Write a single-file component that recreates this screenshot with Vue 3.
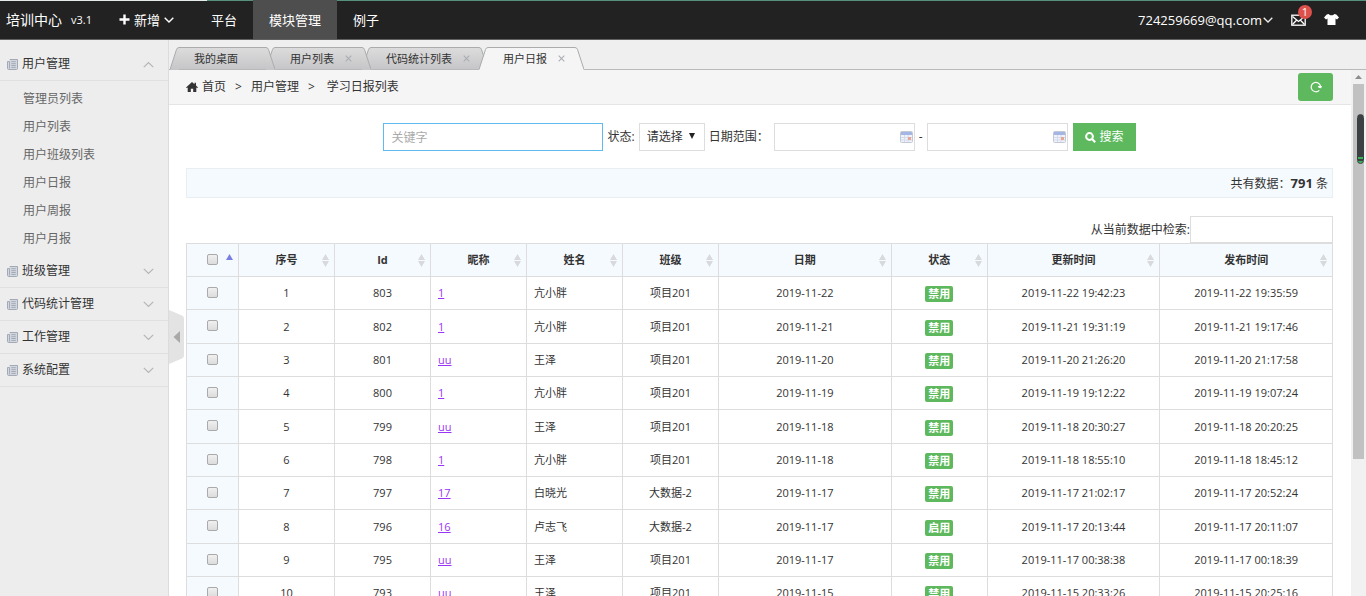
<script setup>
import { ref } from 'vue'

const navItems = [
  { label: '平台' },
  { label: '模块管理', active: true },
  { label: '例子' },
]

const menus = [
  {
    title: '用户管理',
    open: true,
    children: ['管理员列表', '用户列表', '用户班级列表', '用户日报', '用户周报', '用户月报'],
  },
  { title: '班级管理' },
  { title: '代码统计管理' },
  { title: '工作管理' },
  { title: '系统配置' },
]

const tabs = [
  { label: '我的桌面' },
  { label: '用户列表', closable: true },
  { label: '代码统计列表', closable: true },
  { label: '用户日报', closable: true, active: true },
]

const columns = ['序号', 'Id', '昵称', '姓名', '班级', '日期', '状态', '更新时间', '发布时间']

const rows = [
  [1, 803, '1', '亢小胖', '项目201', '2019-11-22', '禁用', '2019-11-22 19:42:23', '2019-11-22 19:35:59'],
  [2, 802, '1', '亢小胖', '项目201', '2019-11-21', '禁用', '2019-11-21 19:31:19', '2019-11-21 19:17:46'],
  [3, 801, 'uu', '王泽', '项目201', '2019-11-20', '禁用', '2019-11-20 21:26:20', '2019-11-20 21:17:58'],
  [4, 800, '1', '亢小胖', '项目201', '2019-11-19', '禁用', '2019-11-19 19:12:22', '2019-11-19 19:07:24'],
  [5, 799, 'uu', '王泽', '项目201', '2019-11-18', '禁用', '2019-11-18 20:30:27', '2019-11-18 20:20:25'],
  [6, 798, '1', '亢小胖', '项目201', '2019-11-18', '禁用', '2019-11-18 18:55:10', '2019-11-18 18:45:12'],
  [7, 797, '17', '白晓光', '大数据-2', '2019-11-17', '禁用', '2019-11-17 21:02:17', '2019-11-17 20:52:24'],
  [8, 796, '16', '卢志飞', '大数据-2', '2019-11-17', '启用', '2019-11-17 20:13:44', '2019-11-17 20:11:07'],
  [9, 795, 'uu', '王泽', '项目201', '2019-11-17', '禁用', '2019-11-17 00:38:38', '2019-11-17 00:18:39'],
  [10, 793, 'uu', '王泽', '项目201', '2019-11-15', '禁用', '2019-11-15 20:33:26', '2019-11-15 20:25:16'],
]

const keyword = ref('')
const dateFrom = ref('')
const dateTo = ref('')
const filterText = ref('')
</script>

<template>
  <div class="page">
    <header class="topbar">
      <a class="logo" href="#">培训中心</a>
      <span class="version">v3.1</span>
      <button class="add" type="button">
        <svg width="11" height="11" viewBox="0 0 11 11"><path d="M5.500 0.500V10.500M0.500 5.500H10.500" stroke="#fff" stroke-width="2.400" /></svg>
        <span>新增</span>
        <svg width="10" height="6" viewBox="0 0 10 6"><path d="M0.700 0.700L5 5L9.300 0.700" fill="none" stroke="#fff" stroke-width="1.400" /></svg>
      </button>
      <nav class="nav">
        <a v-for="n in navItems" :key="n.label" href="#" :class="{ active: n.active }">{{ n.label }}</a>
      </nav>
      <div class="user">
        <a class="account" href="#">
          724259669@qq.com
          <svg width="10" height="6" viewBox="0 0 10 6"><path d="M0.700 0.700L5 5L9.300 0.700" fill="none" stroke="#eee" stroke-width="1.300" /></svg>
        </a>
        <a class="mail" href="#" aria-label="消息">
          <svg width="15" height="12" viewBox="0 0 15 12" fill="none" stroke="#fff" stroke-width="1.300">
            <rect x="0.800" y="1.200" width="13.400" height="10" />
            <path d="M1.500 2.500L7.500 7.500L13.500 2.500M1.500 10.500L5.500 6.200M13.500 10.500L9.500 6.200" />
          </svg>
          <span class="badge">1</span>
        </a>
        <a class="skin" href="#" aria-label="换肤">
          <svg width="15" height="11" viewBox="0 0 15 11"><path d="M4.700 0C5.500 1.800 9.500 1.800 10.300 0L12.300 0.500L15 3.400L13 5.400L11.500 4.500V11H3.500V4.500L2 5.400L0 3.400L2.700 0.500Z" fill="#fff" /></svg>
        </a>
      </div>
    </header>

    <div class="body">
      <aside class="sidebar">
        <section v-for="m in menus" :key="m.title">
          <button class="menu-title" type="button">
            <svg width="11" height="11" viewBox="0 0 11 11" fill="none" stroke="#a3a9b5">
              <path d="M2.700 0.500H10.500V9.500Q10.500 10.500 9.500 10.500H1.700Q0.500 10.500 0.500 9.300V2.500H2.500V9.500" fill="#d3d8e0" />
              <path d="M4.300 2.700H8.800M4.300 4.700H8.800M4.300 6.500H8.800M4.300 8.400H8.800" />
            </svg>
            <span>{{ m.title }}</span>
            <svg class="chevron" :class="{ up: m.open }" width="11" height="7" viewBox="0 0 11 7"><path d="M0.800 0.800L5.500 5.500L10.200 0.800" fill="none" stroke="#b5b5b5" stroke-width="1.200" /></svg>
          </button>
          <ul v-if="m.open" class="submenu">
            <li v-for="c in m.children" :key="c"><a href="#">{{ c }}</a></li>
          </ul>
        </section>
      </aside>

      <main class="main">
        <button class="collapse" type="button" aria-label="收起菜单">
          <svg width="15" height="54" viewBox="0 0 15 54"><path d="M0 0L13 5.500Q15 6.500 15 8.500V45.500Q15 47.500 13 48.500L0 54Z" fill="#e3e3e3" /><path d="M11 21V33L4.500 27Z" fill="#a9a9a9" /></svg>
        </button>

        <svg class="defs" width="0" height="0" aria-hidden="true">
          <defs>
            <linearGradient id="tab-fill" x1="0" y1="0" x2="0" y2="1">
              <stop offset="0" stop-color="#dcdcdd" />
              <stop offset="1" stop-color="#c6c6c8" />
            </linearGradient>
          </defs>
        </svg>
        <div class="tabs">
          <div v-for="t in tabs" :key="t.label" class="tab" :class="{ active: t.active }">
            <svg class="edge" width="9" height="23" viewBox="0 0 9 23">
              <path class="fill" d="M0 23L6.500 2.500Q7.200 0.500 9 0.500V23Z" />
              <path class="line" d="M0 22.500L6.500 2.500Q7.200 0.500 9 0.500" />
            </svg>
            <div class="tab-body">
              <a href="#">{{ t.label }}</a>
              <button v-if="t.closable" type="button" aria-label="关闭">
                <svg width="7" height="7" viewBox="0 0 7 7"><path d="M0.700 0.700L6.300 6.300M6.300 0.700L0.700 6.300" stroke="currentColor" stroke-width="1.100" /></svg>
              </button>
            </div>
            <svg class="edge" width="9" height="23" viewBox="0 0 9 23">
              <path class="fill" d="M9 23L2.500 2.500Q1.800 0.500 0 0.500V23Z" />
              <path class="line" d="M9 22.500L2.500 2.500Q1.800 0.500 0 0.500" />
            </svg>
          </div>
        </div>

        <div class="frame">
          <div class="content">
            <div class="crumbs">
              <svg width="12" height="10" viewBox="0 0 12 10"><path d="M6 0L8.500 2.200V0.800H10V3.500L12 5.400L11.200 6.100L10.300 5.400V10H7.200V6.800H4.800V10H1.700V5.400L0.800 6.100L0 5.400Z" fill="#333" /></svg>
              <a href="#">首页</a>
              <span class="sep">&gt;</span>
              <a href="#">用户管理</a>
              <span class="sep">&gt;</span>
              <span class="current">学习日报列表</span>
              <button class="refresh" type="button" aria-label="刷新">
                <svg width="12" height="12" viewBox="0 0 12 12"><path d="M9.300 9.300A4.700 4.700 0 1 1 10.500 5.200" fill="none" stroke="#fff" stroke-width="1.200" /><path d="M7.600 5H12L11.200 7.300L8.900 7Z" fill="#fff" /></svg>
              </button>
            </div>

            <div class="inner">
              <form class="search" @submit.prevent>
                <input v-model="keyword" class="keyword" type="text" placeholder="关键字" aria-label="关键字">
                <label class="lbl-status" for="status">状态:</label>
                <span class="select-wrap">
                  <select id="status"><option>请选择</option></select>
                  <svg width="6" height="6" viewBox="0 0 6 6"><path d="M0 0H6L3 6Z" fill="#222" /></svg>
                </span>
                <label class="lbl-date" for="from">日期范围：</label>
                <span class="date">
                  <input id="from" v-model="dateFrom" type="text">
                  <svg width="13" height="12" viewBox="0 0 13 12"><rect x="0.500" y="0.500" width="12" height="11" rx="1" fill="#f0f3fa" stroke="#c3c8d4" /><rect x="1" y="1" width="11" height="3" fill="#a3b6e4" /><path d="M1 6.500H12M1 9H12M4.500 4V11M8 4V11" stroke="#d3dbec" /><rect x="8" y="6" width="3" height="3" fill="#e8a593" /></svg>
                </span>
                <span class="dash">-</span>
                <span class="date">
                  <input v-model="dateTo" type="text" aria-label="结束日期">
                  <svg width="13" height="12" viewBox="0 0 13 12"><rect x="0.500" y="0.500" width="12" height="11" rx="1" fill="#f0f3fa" stroke="#c3c8d4" /><rect x="1" y="1" width="11" height="3" fill="#a3b6e4" /><path d="M1 6.500H12M1 9H12M4.500 4V11M8 4V11" stroke="#d3dbec" /><rect x="8" y="6" width="3" height="3" fill="#e8a593" /></svg>
                </span>
                <button class="submit" type="submit">
                  <svg width="11" height="11" viewBox="0 0 11 11" fill="none" stroke="#fff"><circle cx="4.500" cy="4.500" r="3.400" stroke-width="2" /><path d="M7 7L10.200 10.200" stroke-width="2.200" /></svg>
                  搜索
                </button>
              </form>

              <div class="summary">共有数据：<strong>791</strong> 条</div>

              <div class="filter">
                <label for="filter">从当前数据中检索:</label>
                <input id="filter" v-model="filterText" type="text">
              </div>

              <table>
                <colgroup>
                  <col class="c-check"><col class="c-s"><col class="c-s"><col class="c-s"><col class="c-s"><col class="c-s"><col><col class="c-s"><col><col>
                </colgroup>
                <thead>
                  <tr>
                    <th>
                      <input type="checkbox" aria-label="全选">
                      <svg class="asc" width="7" height="6" viewBox="0 0 7 6"><path d="M3.500 0L7 6H0Z" fill="#7b80e0" /></svg>
                    </th>
                    <th v-for="c in columns" :key="c">
                      {{ c }}
                      <svg class="sort" width="7" height="13" viewBox="0 0 7 13"><path d="M3.500 0L7 6H0ZM0 7H7L3.500 13Z" fill="#d7d9dc" /></svg>
                    </th>
                  </tr>
                </thead>
                <tbody>
                  <tr v-for="r in rows" :key="r[0]">
                    <td class="check"><input type="checkbox" :aria-label="'选择 ' + r[1]"></td>
                    <td>{{ r[0] }}</td>
                    <td>{{ r[1] }}</td>
                    <td class="left"><a href="#">{{ r[2] }}</a></td>
                    <td class="left">{{ r[3] }}</td>
                    <td>{{ r[4] }}</td>
                    <td>{{ r[5] }}</td>
                    <td><span class="status">{{ r[6] }}</span></td>
                    <td>{{ r[7] }}</td>
                    <td>{{ r[8] }}</td>
                  </tr>
                </tbody>
              </table>
            </div>
          </div>

          <div class="scrollbar">
            <svg width="7" height="4" viewBox="0 0 7 4"><path d="M3.500 0L7 4H0Z" fill="#8d8d8d" /></svg>
            <div class="thumb"></div>
            <div class="meter"></div>
          </div>
        </div>
      </main>
    </div>
  </div>
</template>

<style>
body {
  overflow: hidden;
}
</style>

<style scoped>
.page {
  display: flex;
  flex-direction: column;
  height: 100vh;
  overflow: hidden;
  font-family: "Open Sans", "Noto Sans CJK SC", sans-serif;
  font-size: 12px;
  line-height: 18px;
  color: #333;
  background: #fff;
}
.page * {
  box-sizing: border-box;
}
a {
  color: inherit;
  text-decoration: none;
}
button,
input,
select {
  font: inherit;
  color: inherit;
  margin: 0;
}
button {
  border: 0;
  padding: 0;
  background: none;
}
svg {
  display: block;
  flex: none;
}
.defs {
  position: absolute;
}

/* top bar */
.topbar {
  flex: none;
  display: flex;
  align-items: center;
  height: 40px;
  padding-left: 6px;
  background: linear-gradient(90deg, #e4ebe8 207px, #56917f 207px) top / 100% 1px no-repeat, #222;
  border-bottom: 1px solid #606060;
  color: #fff;
  font-size: 13px;
}
.logo {
  font-size: 14px;
}
.version {
  margin-left: 9px;
  font-size: 11px;
}
.add {
  display: flex;
  align-items: center;
  gap: 4px;
  margin-left: 27px;
}
.nav {
  display: flex;
  align-self: stretch;
  margin-left: 21px;
}
.nav a {
  display: flex;
  align-items: center;
  padding: 0 16px;
}
.nav .active {
  background: #4e4e4e;
}
.user {
  display: flex;
  align-items: center;
  margin-left: auto;
  padding-right: 27px;
}
.account {
  display: flex;
  align-items: center;
  gap: 1px;
}
.mail {
  position: relative;
  margin: 0 18px;
}
.badge {
  position: absolute;
  left: 7px;
  top: -9px;
  width: 14px;
  height: 14px;
  border-radius: 7px;
  background: #dd514c;
  font-size: 11px;
  line-height: 14px;
  text-align: center;
}

/* sidebar */
.body {
  flex: 1;
  display: flex;
  min-height: 0;
}
.sidebar {
  flex: none;
  width: 169px;
  padding-top: 8px;
  background: #ededed;
  border-right: 1px solid #dcdcdc;
}
.menu-title {
  display: flex;
  align-items: center;
  gap: 4px;
  width: 100%;
  height: 33px;
  padding: 0 14px 0 7px;
  border-bottom: 1px solid #e0e0e0;
}
.chevron {
  margin-left: auto;
}
.chevron.up {
  transform: rotate(180deg);
}
.submenu {
  list-style: none;
  margin: 0;
  padding: 4px 0 2px;
}
.submenu a {
  display: block;
  padding-left: 23px;
  line-height: 28px;
  color: #666;
}

/* main */
.main {
  position: relative;
  flex: 1;
  display: flex;
  flex-direction: column;
  min-width: 0;
}
.collapse {
  position: absolute;
  left: 0;
  top: 270px;
  z-index: 3;
}
.tabs {
  flex: none;
  display: flex;
  align-items: flex-end;
  height: 30px;
  padding-left: 1px;
  background: #efeff0;
  box-shadow: inset 0 -1px #b9b9bb;
  font-size: 11px;
}
.tab {
  position: relative;
  display: flex;
  height: 23px;
  min-width: 105px;
}
.tab + .tab {
  margin-left: -9px;
}
.tab:nth-child(1) {
  z-index: 2;
}
.tab:nth-child(2) {
  z-index: 1;
}
.tab.active {
  z-index: 3;
}
.fill {
  fill: url(#tab-fill);
}
.line {
  fill: none;
  stroke: #a9abac;
}
.tab-body {
  flex: 1;
  display: flex;
  align-items: center;
  gap: 11px;
  padding: 0 9px 0 15px;
  border-top: 1px solid #a9abac;
  border-bottom: 1px solid #b9b9bb;
  background: linear-gradient(#dcdcdd, #c6c6c8);
  white-space: nowrap;
}
.tab-body button {
  color: #aaadb2;
}
.active .tab-body {
  background: #f5f5f5;
  border-bottom-color: #f5f5f5;
}
.active .fill {
  fill: #f5f5f5;
}
.frame {
  flex: 1;
  display: flex;
  min-height: 0;
}
.content {
  flex: 1;
  min-width: 0;
  overflow: hidden;
}
.crumbs {
  display: flex;
  align-items: center;
  height: 35px;
  padding: 0 18px 0 17px;
  background: #f5f5f5;
  border-bottom: 1px solid #e5e5e5;
}
.crumbs > svg {
  margin-right: 4px;
}
.sep {
  margin: 0 9px;
}
.current {
  margin-left: 3px;
}
.refresh {
  display: flex;
  align-items: center;
  justify-content: center;
  width: 35px;
  height: 28px;
  margin-left: auto;
  border-radius: 3px;
  background: #5eb95e;
}
.inner {
  padding: 18px 18px 0 17px;
}

/* search form */
.search {
  display: flex;
  align-items: center;
  justify-content: center;
  height: 28px;
}
.search input,
.search select,
.filter input {
  height: 28px;
  border: 1px solid #ddd;
  border-radius: 0;
  background: #fff;
  outline: none;
}
.search .keyword {
  width: 220px;
  padding: 0 7px;
  border-color: #5fbbee;
}
.keyword::placeholder {
  color: #aaa;
}
.lbl-status {
  margin: 0 4px;
}
.select-wrap,
.date {
  position: relative;
  flex: none;
}
.search select {
  display: block;
  appearance: none;
  width: 66px;
  padding: 0 7px;
}
.select-wrap svg {
  position: absolute;
  right: 10px;
  top: 10px;
  pointer-events: none;
}
.lbl-date {
  margin: 0 5px 0 4px;
}
.date input {
  display: block;
  width: 141px;
  padding: 0 22px 0 6px;
}
.date svg {
  position: absolute;
  right: 2px;
  top: 8px;
}
.dash {
  margin: 0 4px;
}
.submit {
  display: flex;
  align-items: center;
  justify-content: center;
  gap: 4px;
  width: 63px;
  height: 28px;
  margin-left: 5px;
  background: #5eb95e;
  color: #fff;
}

.summary {
  height: 30px;
  margin-top: 17px;
  padding: 0 4px;
  border: 1px solid #e9eef2;
  background: #f5fafe;
  line-height: 28px;
  text-align: right;
}
.summary strong {
  font-size: 13px;
}
.filter {
  display: flex;
  align-items: center;
  justify-content: flex-end;
  margin-top: 18px;
}
.filter input {
  width: 143px;
  height: 27px;
  padding: 0 6px;
}

/* data table */
table {
  width: 100%;
  table-layout: fixed;
  border-collapse: collapse;
  font-size: 11px;
  line-height: 16px;
  text-align: center;
}
.c-check {
  width: 52px;
}
.c-s {
  width: 96px;
}
tr {
  height: 33px;
}
tbody tr:nth-child(3n + 2) {
  height: 34px;
}
th,
td {
  padding: 0 7px;
  border: 1px solid #ddd;
}
th {
  position: relative;
  background: #f5fafe;
}
.check {
  background: #f5fafe;
}
.left {
  text-align: left;
}
.left a {
  color: #9a35f5;
  text-decoration: underline;
}
.sort,
.asc {
  position: absolute;
  right: 5px;
  top: 10px;
}
input[type="checkbox"] {
  appearance: none;
  display: block;
  width: 11px;
  height: 11px;
  margin: 0 auto 2px;
  border: 1px solid #aaa;
  border-radius: 2px;
  background: linear-gradient(#f0f0f0, #dcdcdc);
}
.status {
  display: block;
  width: 28px;
  margin: 2px auto 0;
  border-radius: 2px;
  background: #5eb95e;
  color: #fff;
  font-weight: 700;
}

/* scroll bar */
.scrollbar {
  position: relative;
  flex: none;
  width: 15px;
  padding: 5px 2px 0;
  background: #f1f1f1;
}
.scrollbar svg {
  margin: 0 auto 5px;
}
.thumb {
  height: 72%;
  background: #c1c1c1;
}
.meter {
  position: absolute;
  right: 2px;
  top: 44px;
  width: 7px;
  height: 50px;
  border-radius: 4px;
  background: linear-gradient(#3d4043 42px, #35b558 42px, #35b558 44px, #3d4043 44px, #3d4043 46px, #35b558 46px);
  border: 1px solid #3d4043;
}
</style>
